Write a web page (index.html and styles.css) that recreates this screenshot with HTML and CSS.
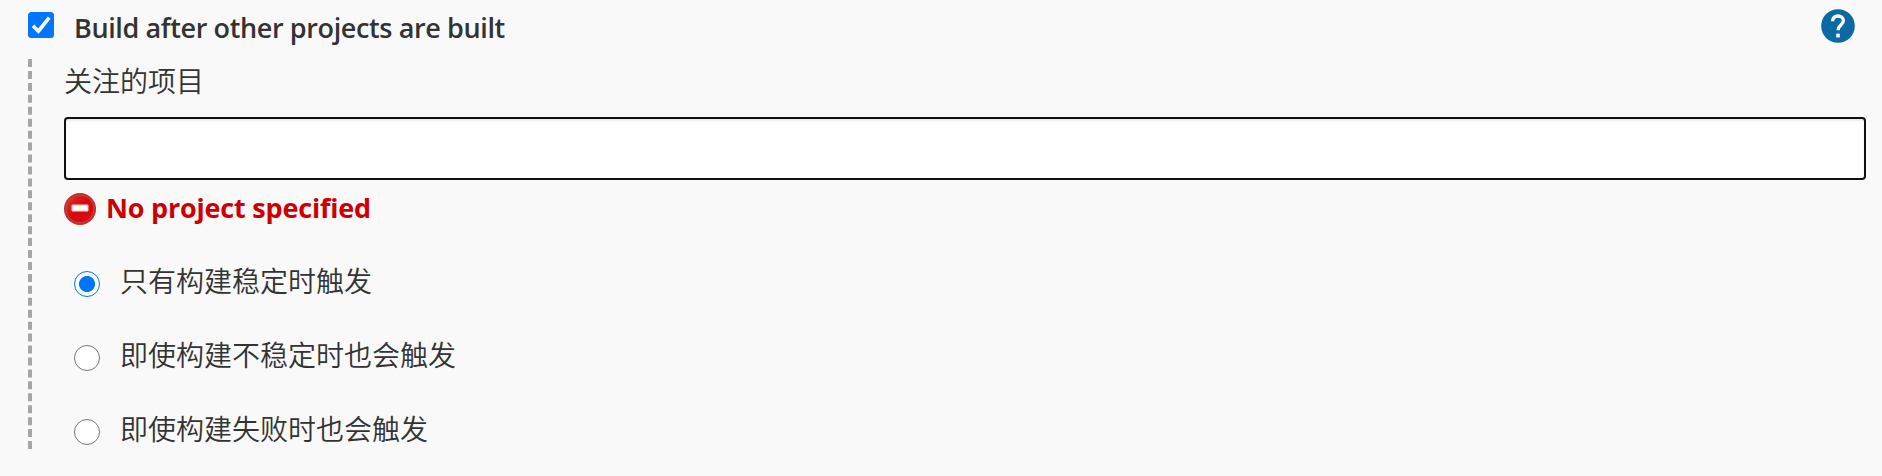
FILE: index.html
```
<!DOCTYPE html>
<html lang="zh-CN">
<head>
<meta charset="utf-8">
<title>Build triggers</title>
<link rel="stylesheet" href="styles.css">
</head>
<body>
<section class="trigger">
  <header class="trigger-head">
    <label class="trigger-toggle">
      <input class="check-input" type="checkbox" checked>
      <svg class="check" viewBox="0 0 26 26"><rect width="26" height="26" rx="3.5" fill="#0075ff"/><path d="M5 13.8 10.4 19.2 21.2 5.6" fill="none" stroke="#fff" stroke-width="3.6"/></svg>
      <span class="trigger-title">Build after other projects are built</span>
    </label>
    <svg class="help" viewBox="0 0 34 34"><circle cx="17" cy="17" r="16.8" fill="#0b6aa2"/><path d="M11.6 12.2C11.6 8.8 13.8 7 17 7s5.4 1.9 5.4 4.8c0 4.1-5.4 4.5-5.4 9.4" fill="none" stroke="#fff" stroke-width="3.3"/><rect x="15.2" y="24.6" width="3.6" height="3.8" fill="#fff"/></svg>
  </header>
  <div class="trigger-body">
    <label class="field-label" for="projects">关注的项目</label>
    <input class="field" id="projects" type="text">
    <div class="error">
      <svg class="error-icon" viewBox="0 0 32 32"><defs><linearGradient id="red" x1="0" y1="0" x2="1" y2="1"><stop offset="0" stop-color="#e3302f"/><stop offset=".5" stop-color="#d4090b"/><stop offset="1" stop-color="#e30d0e"/></linearGradient></defs><circle cx="16" cy="16" r="16" fill="#b5302f"/><circle cx="16" cy="16" r="14" fill="url(#red)" stroke="#cf4543" stroke-width="1"/><rect x="7.8" y="11.8" width="16.4" height="6.4" rx=".6" fill="#fff" stroke="#e88b88" stroke-width=".9"/></svg>
      <span class="error-text">No project specified</span>
    </div>
    <div class="options">
      <label class="option"><input class="radio" type="radio" name="threshold" checked><span>只有构建稳定时触发</span></label>
      <label class="option"><input class="radio" type="radio" name="threshold"><span>即使构建不稳定时也会触发</span></label>
      <label class="option"><input class="radio" type="radio" name="threshold"><span>即使构建失败时也会触发</span></label>
    </div>
  </div>
</section>
</body>
</html>
```
FILE: styles.css
```
* { box-sizing: border-box; }
body {
  margin: 0;
  background: #f9f9f9;
  color: #333;
  font: 28px/40px "Open Sans", "Noto Sans CJK SC", sans-serif;
}
.trigger { padding: 0 16px 0 28px; }
.trigger-head {
  display: flex;
  justify-content: space-between;
  align-items: flex-start;
  height: 59px;
  padding: 9px 11px 0 0;
}
.trigger-toggle { display: flex; }
.check-input { appearance: none; width: 0; height: 0; margin: 0; }
.check { width: 26px; height: 26px; margin-top: 3px; }
.trigger-title {
  margin-left: 20px;
  font-weight: 600;
  font-size: 27px;
  letter-spacing: -.38px;
  line-height: 38px;
  white-space: nowrap;
}
.help { width: 34px; height: 34px; }
.trigger-body {
  height: 390px;
  border-left: 4px dashed #a6a6a6;
  padding-left: 32px;
}
.field-label {
  display: block;
  height: 58px;
  padding-top: 1px;
  font-family: "Noto Sans CJK SC", sans-serif;
  font-weight: 350;
}
.field {
  display: block;
  width: 100%;
  height: 63px;
  padding: 0 12px;
  border: 2px solid #111;
  border-radius: 4px;
  background: #fff;
  box-shadow: inset 0 2px 2px rgba(0, 0, 0, .075);
  font: inherit;
}
.error { display: flex; align-items: center; height: 32px; margin-top: 13px; }
.error-icon { width: 32px; height: 32px; }
.error-text {
  margin: -2px 0 0 10px;
  color: #c00;
  font-weight: 700;
  font-size: 27px;
  letter-spacing: -.2px;
  white-space: nowrap;
}
.options { padding: 35px 0 0 10px; }
.option {
  display: flex;
  height: 74px;
  font-family: "Noto Sans CJK SC", sans-serif;
  font-weight: 350;
}
.radio {
  appearance: none;
  width: 26px;
  height: 26px;
  margin: 11px 20px 0 0;
  border: 1px solid #767676;
  border-radius: 50%;
  background: #fff;
}
.radio:checked {
  border-color: #0075ff;
  background: radial-gradient(circle, #0075ff 7.6px, #fff 8.4px);
}
```
